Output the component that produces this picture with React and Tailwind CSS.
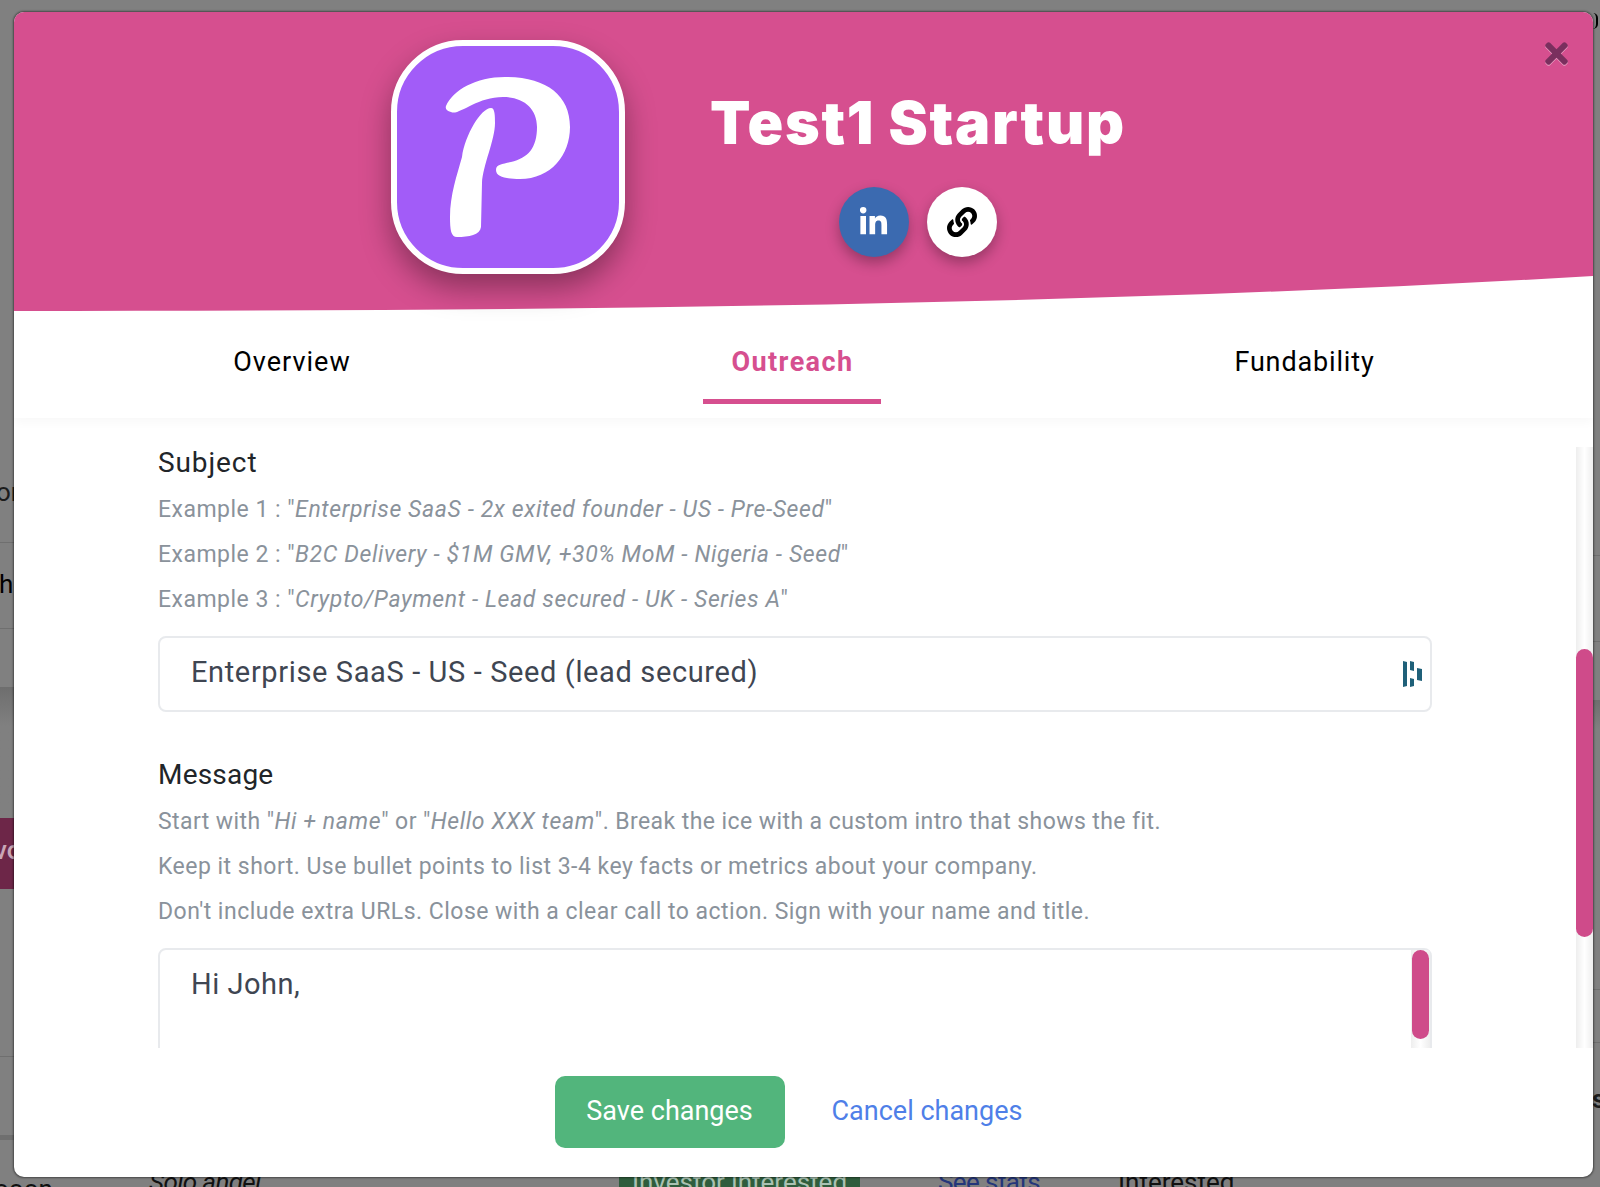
import React from "react";
import { FaLinkedinIn, FaLink, FaTimes } from "react-icons/fa";

const bodyFont = "font-['Roboto','Noto_Sans',sans-serif]";

function LeftStrip() {
  return (
    <div className="w-[14px] shrink-0 overflow-hidden text-[#1c1c1c] text-[26px] leading-none">
      <div className="h-[543px] border-b border-[#6f6f6f] flex items-end pb-[37px]">
        <span className="-ml-[4px]">or</span>
      </div>
      <div className="h-[86px] border-b border-[#6f6f6f] flex items-center pb-[4px]">
        <span className="-ml-[1px] text-black">h</span>
      </div>
      <div className="h-[58px]" />
      <div className="h-[131px] bg-linear-to-b from-[#6e6e6e] to-[#808080] to-30%" />
      <div className="h-[71px] bg-[#6d2648] flex items-center pb-[8px] text-[#c9a6b6]">
        <span className="-ml-[6px] whitespace-nowrap font-medium">vo</span>
      </div>
      <div className="h-[168px] border-b border-[#6f6f6f]" />
      <div className="h-[83px] border-b-[5px] border-[#6f6f6f]" />
    </div>
  );
}

function RightStrip() {
  return (
    <div className="w-[7px] shrink-0 overflow-hidden text-[26px] leading-none">
      <div className="h-[543px] border-b border-[#6f6f6f]">
        <span className="block w-[5px] h-[16px] mt-[13px] rounded-r-full border-r-2 border-black" />
      </div>
      <div className="h-[86px] border-b border-[#6f6f6f]" />
      <div className="h-[58px]" />
      <div className="h-[290px] bg-linear-to-b from-[#6e6e6e] to-[#808080] to-10% border-b border-[#6f6f6f]" />
      <div className="h-[53px] border-b border-[#6f6f6f]" />
      <div className="h-[110px] border-b-[5px] border-[#6f6f6f] pt-[43px] text-[#1c1c1c] font-bold">
        <span className="-ml-[1px] block">s</span>
      </div>
    </div>
  );
}

function BottomRow() {
  return (
    <div className="h-[45px] flex text-[26px] leading-[30px] whitespace-nowrap text-[#111]">
      <span className="w-[155px] -ml-[6px] mt-[32px]">ooon</span>
      <span className="w-[470px] mt-[25px] italic tracking-[-0.6px]">Solo angel</span>
      <span className="w-[241px] mt-[25px] bg-[#2f5d3d] text-[#a9c2b2] text-center">Investor interested</span>
      <span className="w-[78px]" />
      <span className="w-[180px] mt-[25px] text-[#24367a] tracking-[-0.6px]">See stats</span>
      <span className="mt-[25px]">Interested</span>
    </div>
  );
}

function DashlaneIcon() {
  return (
    <svg width="20" height="26" viewBox="0 0 20 26" className="shrink-0">
      <path d="M0 0 L4 1 V25 L0 26 Z" fill="#1f6079" />
      <path d="M7 0 L11 1 V10 L7 9 Z" fill="#1f6079" />
      <path d="M7 17 L11 18 V25 L7 26 Z" fill="#1f6079" />
      <path d="M14 7 L19 8 V20 L14 19 Z" fill="#1f6079" />
    </svg>
  );
}

function LogoP() {
  return (
    <svg viewBox="0 0 222 222" className="w-full h-full">
      <g transform="translate(-6 -6)" fill="#fff">
        <path d="M55 66 C62 50 85 37 114 37 C155 37 179 55 179 87 C179 115 160 139 129 139 C115 139 105 137 105 130 C105 124 112 124 120 122 C137 118 146 108 146 87 C146 68 132 57 112 57 C85 57 68 76 60 72 C56 71 54 69 55 66 Z" />
        <path d="M100 68 C104 68 104 76 104 83 C104 100 92 125 91 143 L90 187 C89 195 78 197 66 197 C60 197 59 190 59 177 C59 155 66 135 71 117 C74 95 90 68 100 68 Z" />
      </g>
    </svg>
  );
}

function Hints({ children }) {
  return (
    <div className="text-[23px] leading-[45px] text-[#8a929b] tracking-[0.48px] [&_em]:tracking-[0.62px]">
      {children}
    </div>
  );
}

export default function App() {
  return (
    <div className={`relative h-[1187px] w-full overflow-hidden bg-[#808080] ${bodyFont}`}>
      <div className="h-[1142px] flex justify-between">
        <LeftStrip />
        <RightStrip />
      </div>
      <BottomRow />

      {/* modal */}
      <div className="absolute left-[14px] top-[12px] w-[1579px] h-[1165px] rounded-[10px] bg-white overflow-hidden flex flex-col shadow-[0_0_2px_1px_rgba(0,0,0,0.45)]">
        <div className="relative h-[299px] shrink-0 bg-[#d64f8f] pt-[28px] pl-[377px] flex items-start">
          <svg viewBox="0 0 1579 35" className="absolute left-0 bottom-0 w-[1579px] h-[35px]" preserveAspectRatio="none">
            <path d="M0 35 C600 35 1100 28 1579 0 L1579 35 Z" fill="#fff" />
          </svg>
          <div className="relative w-[234px] h-[234px] rounded-[72px] border-[6px] border-white bg-[#a25cf8] shadow-[0_14px_30px_rgba(0,0,0,0.36)] shrink-0 overflow-hidden">
            <LogoP />
          </div>
          <div className="relative ml-[85px] flex flex-col items-center">
            <h1 className="font-['Inter',sans-serif] font-black text-[59px] leading-[70px] tracking-[1.7px] mt-[48px] text-white whitespace-nowrap">
              Test1 Startup
            </h1>
            <div className="flex gap-[18px] mt-[29px]">
              <div className="w-[70px] h-[70px] rounded-full bg-[#3b6ab0] flex items-center justify-center text-white shadow-[0_6px_14px_rgba(0,0,0,0.3)]">
                <FaLinkedinIn size={31} />
              </div>
              <div className="w-[70px] h-[70px] rounded-full bg-white flex items-center justify-center text-black shadow-[0_6px_14px_rgba(0,0,0,0.3)]">
                <FaLink size={30} />
              </div>
            </div>
          </div>
          <FaTimes size={33} className="absolute right-[20px] top-[25px] text-[#7a2f5e] drop-shadow-[0_1px_0_rgba(255,255,255,0.45)]" />
        </div>

        <div className="h-[107px] shrink-0 flex justify-between px-[191px] text-[27px] text-black tracking-[1px] shadow-[0_4px_10px_rgba(0,0,0,0.03)]">
          <div className="w-[174px] text-center pt-[31px]">Overview</div>
          <div className="w-[178px] h-[93px] text-center pt-[31px] pl-[2px] font-bold tracking-[1.4px] text-[#d64f8f] border-b-[5px] border-[#d64f8f]">Outreach</div>
          <div className="w-[198px] text-center pt-[31px] pl-[3px] tracking-[0.85px]">Fundability</div>
        </div>

        <div className="flex-1 min-h-0 flex">
          <div className="flex-1 min-w-0 overflow-hidden pl-[144px] pr-[144px] pt-[20px]">
            <div className="text-[28px] leading-[49px] text-[#212529] tracking-[0.9px]">Subject</div>
            <Hints>Example 1 : "<em>Enterprise SaaS - 2x exited founder - US - Pre-Seed</em>"</Hints>
            <Hints>Example 2 : "<em>B2C Delivery - $1M GMV, +30% MoM - Nigeria - Seed</em>"</Hints>
            <Hints>Example 3 : "<em>Crypto/Payment - Lead secured - UK - Series A</em>"</Hints>
            <div className="mt-[14px] h-[76px] rounded-[8px] border-2 border-[#e8eaed] flex items-center justify-between pl-[31px] pr-[7px] text-[29px] text-[#3f4652] tracking-[0.63px]">
              <span className="-mt-[2px]">Enterprise SaaS - US - Seed (lead secured)</span>
              <DashlaneIcon />
            </div>
            <div className="mt-[38px] text-[28px] leading-[49px] text-[#212529] tracking-[0.2px]">Message</div>
            <Hints>
              <span className="tracking-[0.42px]">
                Start with "<em>Hi + name</em>" or "<em>Hello XXX team</em>". Break the ice with a custom intro that shows the fit.
              </span>
            </Hints>
            <Hints>Keep it short. Use bullet points to list 3-4 key facts or metrics about your company.</Hints>
            <Hints>Don't include extra URLs. Close with a clear call to action. Sign with your name and title.</Hints>
            <div className="mt-[14px] h-[200px] rounded-[8px] border-2 border-[#e8eaed] flex justify-between text-[29px] text-[#3f4652] tracking-[0.5px]">
              <div className="pl-[31px] pt-[13px]">Hi John,</div>
              <div className="w-[19px] h-full bg-linear-to-r from-[#eeeeee] via-white to-[#eeeeee]">
                <div className="h-[89px] mx-auto w-[17px] rounded-full bg-[#cf4b8a]" />
              </div>
            </div>
          </div>
          <div className="w-[17px] shrink-0 pt-[29px]">
            <div className="h-full bg-linear-to-r from-[#eeeeee] via-white to-[#eeeeee] pt-[202px]">
              <div className="h-[288px] rounded-full bg-[#cf4b8a]" />
            </div>
          </div>
        </div>

        <div className="h-[129px] shrink-0 flex items-center justify-center gap-[47px] pr-[30px] pb-[1px] text-[27px]">
          <button className="w-[230px] h-[72px] rounded-[10px] bg-[#52b57c] text-white pb-[2px]">Save changes</button>
          <button className="text-[#4f7fe8] pb-[2px]">Cancel changes</button>
        </div>
      </div>
    </div>
  );
}
